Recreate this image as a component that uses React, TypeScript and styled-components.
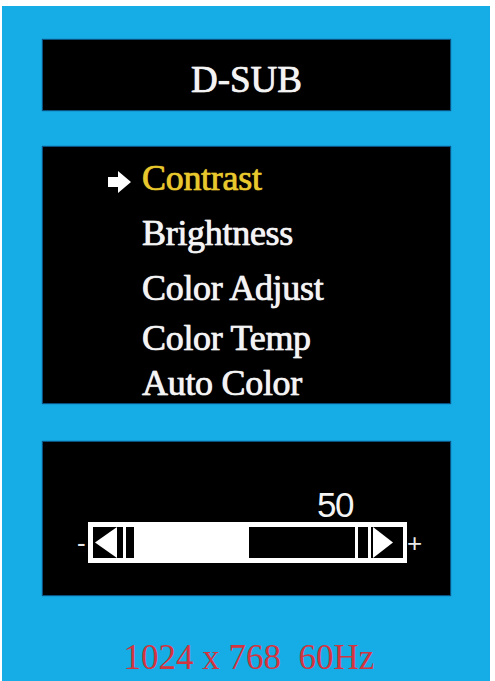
import React from "react";
import styled, { createGlobalStyle } from "styled-components";

const GlobalStyle = createGlobalStyle`
  html, body {
    margin: 0;
    padding: 0;
    background: #ffffff;
  }
  body {
    width: 495px;
    height: 681px;
    overflow: hidden;
    font-family: "Liberation Serif", "Times New Roman", serif;
  }
`;

const menuItems = [
  { label: "Contrast", height: 55 },
  { label: "Brightness", height: 55 },
  { label: "Color Adjust", height: 50 },
  { label: "Color Temp", height: 45 },
  { label: "Auto Color", height: 45 },
];

function App() {
  const selected = 0;
  const value = 50;

  return (
    <>
      <GlobalStyle />
      <Screen>
        <TitleBox>D-SUB</TitleBox>

        <MenuBox>
          {menuItems.map((item, i) => (
            <MenuRow key={item.label} $height={item.height}>
              <ArrowSlot>
                {i === selected && (
                  <svg width="23" height="22" viewBox="0 0 23 22">
                    <polygon
                      points="0,6 10,6 10,0 23,11 10,22 10,16 0,16"
                      fill="#ffffff"
                    />
                  </svg>
                )}
              </ArrowSlot>
              <MenuLabel $active={i === selected}>{item.label}</MenuLabel>
            </MenuRow>
          ))}
        </MenuBox>

        <SliderBox>
          <ValueLabel>{value}</ValueLabel>
          <SliderRow>
            <Sign $side="left">-</Sign>
            <Bar>
              <StepButton>
                <svg width="30" height="31" viewBox="0 0 30 31">
                  <polygon points="2,15.5 24,0 24,31" fill="#ffffff" />
                </svg>
              </StepButton>
              <Gap />
              <EndStop $w={8} />
              <Track>
                <Fill style={{ width: `${value + 2}%` }} />
              </Track>
              <Gap />
              <EndStop $w={10} />
              <Gap />
              <StepButton $w={32}>
                <svg width="32" height="31" viewBox="0 0 32 31">
                  <polygon points="2,0 22,15.5 2,31" fill="#ffffff" />
                </svg>
              </StepButton>
            </Bar>
            <Sign $side="right">+</Sign>
          </SliderRow>
        </SliderBox>

        <Footer>1024 x 768&nbsp;&nbsp;60Hz</Footer>
      </Screen>
    </>
  );
}

export default App;

const Screen = styled.div`
  margin: 6px 0 0 2px;
  width: 488px;
  height: 675px;
  box-sizing: border-box;
  padding: 34px 0 0 41px;
  background: #16ade6;
  display: flex;
  flex-direction: column;
  align-items: flex-start;
  overflow: hidden;
`;

const Panel = styled.div`
  width: 407px;
  background: #000000;
  box-shadow: 0 0 1px 1px rgba(0, 20, 60, 0.6);
  box-sizing: border-box;
`;

const TitleBox = styled(Panel)`
  height: 70px;
  padding-top: 10px;
  line-height: 60px;
  text-align: center;
  font-size: 37px;
  color: #f4f4f4;
  -webkit-text-stroke: 0.5px #f4f4f4;
  text-shadow: 0 0 1px #ffffff;
`;

const MenuBox = styled(Panel)`
  margin-top: 37px;
  height: 256px;
  padding: 6px 0 0 65px;
  display: flex;
  flex-direction: column;
`;

const MenuRow = styled.div<{ $height: number }>`
  height: ${(p) => p.$height}px;
  display: flex;
  align-items: flex-start;
  flex-shrink: 0;
`;

const ArrowSlot = styled.div`
  width: 34px;
  height: 50px;
  display: flex;
  align-items: center;
  padding-top: 8px;
  box-sizing: border-box;
`;

const MenuLabel = styled.span<{ $active: boolean }>`
  font-size: 36px;
  line-height: 50px;
  white-space: nowrap;
  letter-spacing: -0.3px;
  color: ${(p) => (p.$active ? "#e8c82c" : "#f4f4f4")};
  -webkit-text-stroke: 0.5px ${(p) => (p.$active ? "#e8c82c" : "#f4f4f4")};
  text-shadow: 0 0 1px ${(p) => (p.$active ? "#e8c82c" : "#ffffff")};
`;

const SliderBox = styled(Panel)`
  margin-top: 39px;
  height: 153px;
  padding-top: 46px;
  display: flex;
  flex-direction: column;
`;

const ValueLabel = styled.div`
  width: 407px;
  box-sizing: border-box;
  padding-right: 97px;
  text-align: right;
  font-family: "Liberation Sans", Arial, sans-serif;
  font-size: 35px;
  line-height: 34px;
  height: 34px;
  color: #f4f4f4;
  letter-spacing: -1.5px;
`;

const SliderRow = styled.div`
  display: flex;
  align-items: center;
  padding-left: 34px;
`;

const Sign = styled.span<{ $side: "left" | "right" }>`
  width: ${(p) => (p.$side === "left" ? "11px" : "20px")};
  font-family: "Liberation Sans", Arial, sans-serif;
  font-size: 26px;
  line-height: 26px;
  color: #e8e8e8;
  text-align: left;
`;

const Bar = styled.div`
  width: 319px;
  height: 41px;
  box-sizing: border-box;
  padding: 5px 4px 5px 5px;
  background: #ffffff;
  display: flex;
  align-items: stretch;
`;

const StepButton = styled.div<{ $w?: number }>`
  width: ${(p) => p.$w ?? 30}px;
  flex-shrink: 0;
  background: #000000;
  display: flex;

  svg {
    display: block;
  }
`;

const Gap = styled.div`
  width: 3px;
  flex-shrink: 0;
  background: #ffffff;
`;

const EndStop = styled.div<{ $w: number }>`
  width: ${(p) => p.$w}px;
  flex-shrink: 0;
  background: #000000;
`;

const Track = styled.div`
  flex: 1;
  background: #000000;
  display: flex;
`;

const Fill = styled.div`
  background: #ffffff;
`;

const Footer = styled.div`
  margin-top: 43px;
  width: 407px;
  padding-left: 5px;
  box-sizing: border-box;
  text-align: center;
  font-size: 35px;
  line-height: 40px;
  color: #d2353f;
  white-space: nowrap;
`;
